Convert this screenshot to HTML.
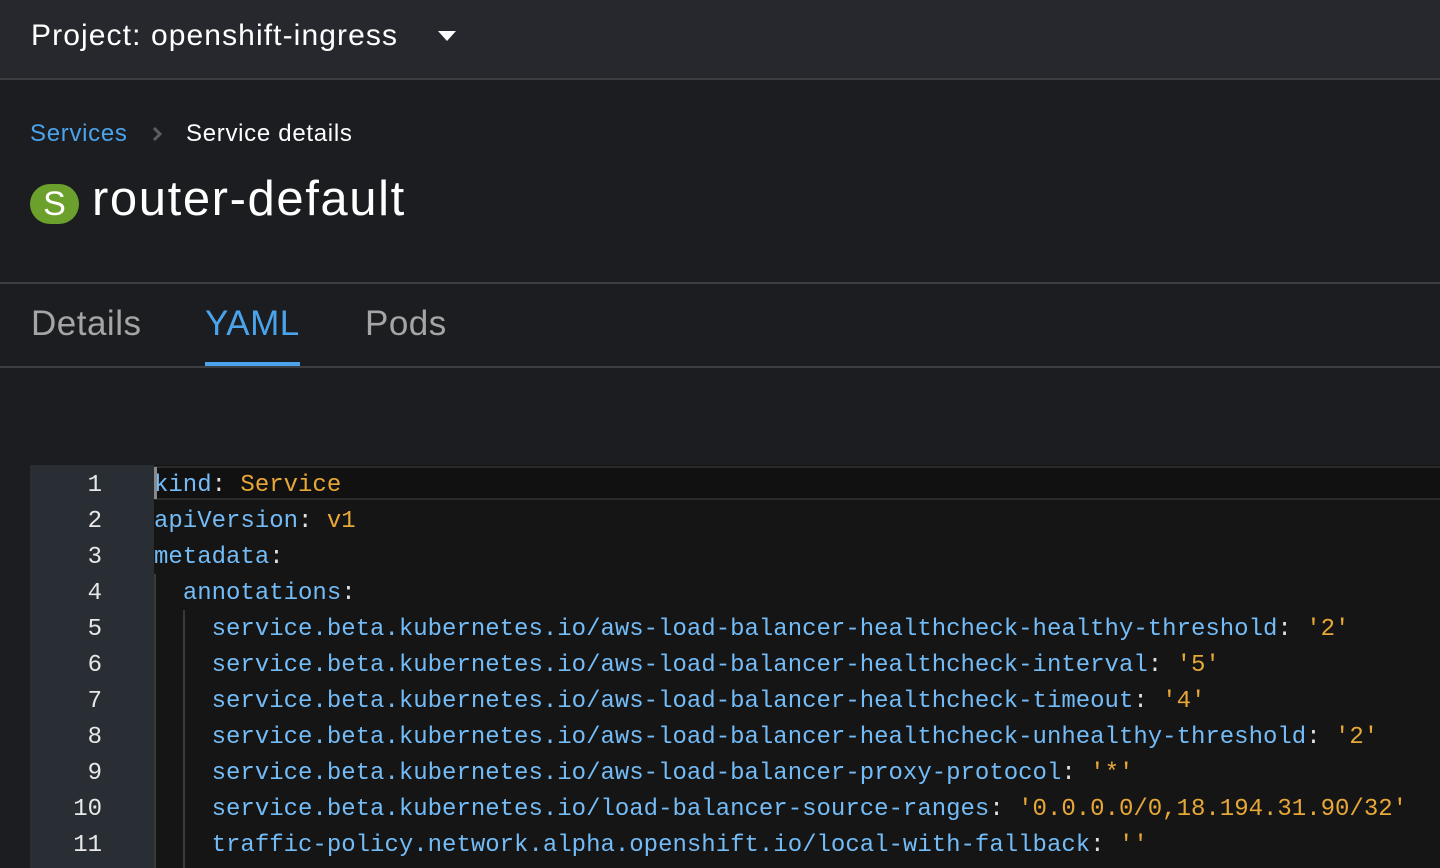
<!DOCTYPE html>
<html><head><meta charset="utf-8"><style>
*{margin:0;padding:0;box-sizing:border-box}
body{width:1440px;height:868px;overflow:hidden;background:#1b1d21;font-family:"Liberation Sans",sans-serif;position:relative}
.top{position:absolute;left:0;top:0;width:1440px;height:80px;background:#26282d;border-bottom:2px solid #3c3f42}
.top .t{position:absolute;left:31px;top:19px;font-size:30px;color:#fff;letter-spacing:1.1px}
.caret{position:absolute;left:438px;top:31px;width:0;height:0;border-left:9px solid transparent;border-right:9px solid transparent;border-top:10px solid #fff}
.bc{position:absolute;top:120px;font-size:24px;letter-spacing:0.7px}
.title{position:absolute;left:92px;top:171px;font-size:49px;color:#fff;letter-spacing:1.6px}
.badge{position:absolute;left:30px;top:184px;width:49px;height:40px;border-radius:20px;background:#6ca02c;color:#fff;font-size:34px;text-align:center;line-height:40px}
.hr{position:absolute;left:0;width:1440px;height:2px;background:#3c3f42}
.tab{position:absolute;top:304px;font-size:35px;color:#a5a5a5;letter-spacing:0.5px}
.ul{position:absolute;left:205px;top:362px;width:95px;height:4px;background:#4aa3eb}
.ed{position:absolute;left:30px;top:465px;width:1410px;height:403px;background:#151515}
.gut{position:absolute;left:30px;top:465px;width:124px;height:403px;background:#292e34}
.cur{position:absolute;left:154px;top:466px;width:1286px;height:34px;border-top:2px solid #2a2a2a;border-bottom:2px solid #2a2a2a;background:#111}
.caretbar{position:absolute;left:154px;top:467px;width:3px;height:32px;background:#8a8a8a}
.ln,.code{position:absolute;font-family:"Liberation Mono",monospace;font-size:24px;line-height:36px;white-space:pre}
.ln{left:30px;width:72px;top:468px;text-align:right;color:#e8e8e8}
.code{left:154px;top:468px;color:#e0e0e0}
.k{color:#73bcf7}.v{color:#e8a838}
.guide{position:absolute;width:2px;background:#3a3a3a}
</style></head><body>
<div class="top"><div class="t">Project: openshift-ingress</div><div class="caret"></div></div>
<div class="bc" style="left:30px;color:#4aa3eb">Services</div>
<svg style="position:absolute;left:150px;top:125px" width="14" height="18" viewBox="0 0 14 18"><path d="M4 3 L10 9 L4 15" stroke="#5a5d61" stroke-width="3" fill="none"/></svg>
<div class="bc" style="left:186px;color:#fff">Service details</div>
<div class="badge">S</div>
<div class="title">router-default</div>
<div class="hr" style="top:282px"></div>
<div class="tab" style="left:31px">Details</div>
<div class="tab" style="left:205px;color:#4aa3eb">YAML</div>
<div class="tab" style="left:365px">Pods</div>
<div class="ul"></div>
<div class="hr" style="top:366px"></div>
<div class="ed"></div>
<div class="gut"></div>
<div class="cur"></div>
<div class="guide" style="left:154px;top:574px;height:294px"></div>
<div class="guide" style="left:183px;top:610px;height:258px"></div>
<div class="ln">1
2
3
4
5
6
7
8
9
10
11</div>
<div class="code"><span class="k">kind</span>: <span class="v">Service</span>
<span class="k">apiVersion</span>: <span class="v">v1</span>
<span class="k">metadata</span>:
  <span class="k">annotations</span>:
    <span class="k">service.beta.kubernetes.io/aws-load-balancer-healthcheck-healthy-threshold</span>: <span class="v">'2'</span>
    <span class="k">service.beta.kubernetes.io/aws-load-balancer-healthcheck-interval</span>: <span class="v">'5'</span>
    <span class="k">service.beta.kubernetes.io/aws-load-balancer-healthcheck-timeout</span>: <span class="v">'4'</span>
    <span class="k">service.beta.kubernetes.io/aws-load-balancer-healthcheck-unhealthy-threshold</span>: <span class="v">'2'</span>
    <span class="k">service.beta.kubernetes.io/aws-load-balancer-proxy-protocol</span>: <span class="v">'*'</span>
    <span class="k">service.beta.kubernetes.io/load-balancer-source-ranges</span>: <span class="v">'0.0.0.0/0,18.194.31.90/32'</span>
    <span class="k">traffic-policy.network.alpha.openshift.io/local-with-fallback</span>: <span class="v">''</span></div>
<div class="caretbar"></div>
</body></html>
